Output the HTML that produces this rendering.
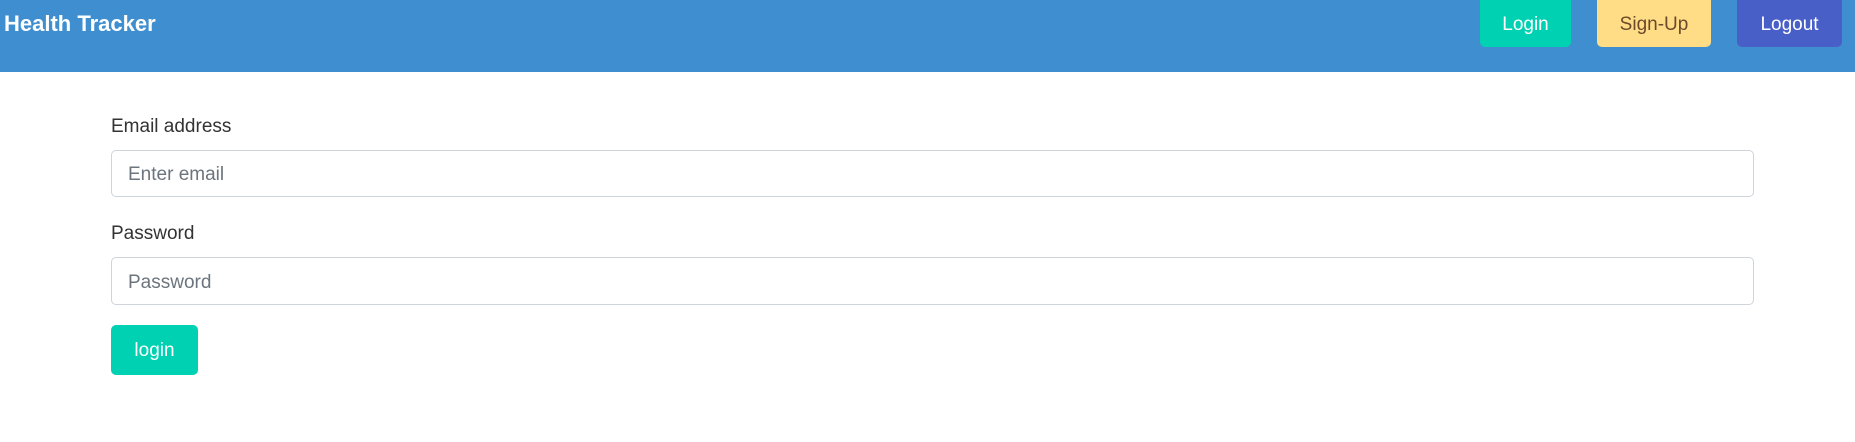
<!DOCTYPE html>
<html><head><style>
body{margin:0;width:1855px;height:442px;background:#fff;font-family:"Liberation Sans",sans-serif;overflow:hidden;position:relative}
.hdr{position:absolute;left:0;top:0;width:1855px;height:72px;background:#3f8fd0}
.title{position:absolute;left:4px;top:11px;color:#fff;font-weight:bold;font-size:22px}
.b{position:absolute;top:0;height:47px;border-radius:0 0 5px 5px;font-size:19px;display:flex;align-items:center;justify-content:center;color:#fff;padding-top:2px;box-sizing:border-box}
.lab{position:absolute;left:111px;font-size:19px;color:#333}
.inp{position:absolute;left:111px;width:1643px;height:45px;border:1px solid #ced4da;border-radius:5px;box-sizing:border-box;font-size:19px;color:#6c757d;padding-left:16px;padding-top:3px;display:flex;align-items:center}
</style></head><body>
<div class="hdr"><div class="title">Health Tracker</div>
<div class="b" style="left:1480px;width:91px;background:#00d1b2">Login</div>
<div class="b" style="left:1597px;width:114px;background:#ffdd87;color:#6b4a2a">Sign-Up</div>
<div class="b" style="left:1737px;width:105px;background:#485fc7">Logout</div>
</div>
<div class="lab" style="top:116px">Email address</div>
<div class="inp" style="top:150px;height:47px">Enter email</div>
<div class="lab" style="top:223px">Password</div>
<div class="inp" style="top:257px;height:48px">Password</div>
<div class="b" style="left:111px;top:325px;width:87px;height:50px;border-radius:5px;background:#00d1b2">login</div>
</body></html>
